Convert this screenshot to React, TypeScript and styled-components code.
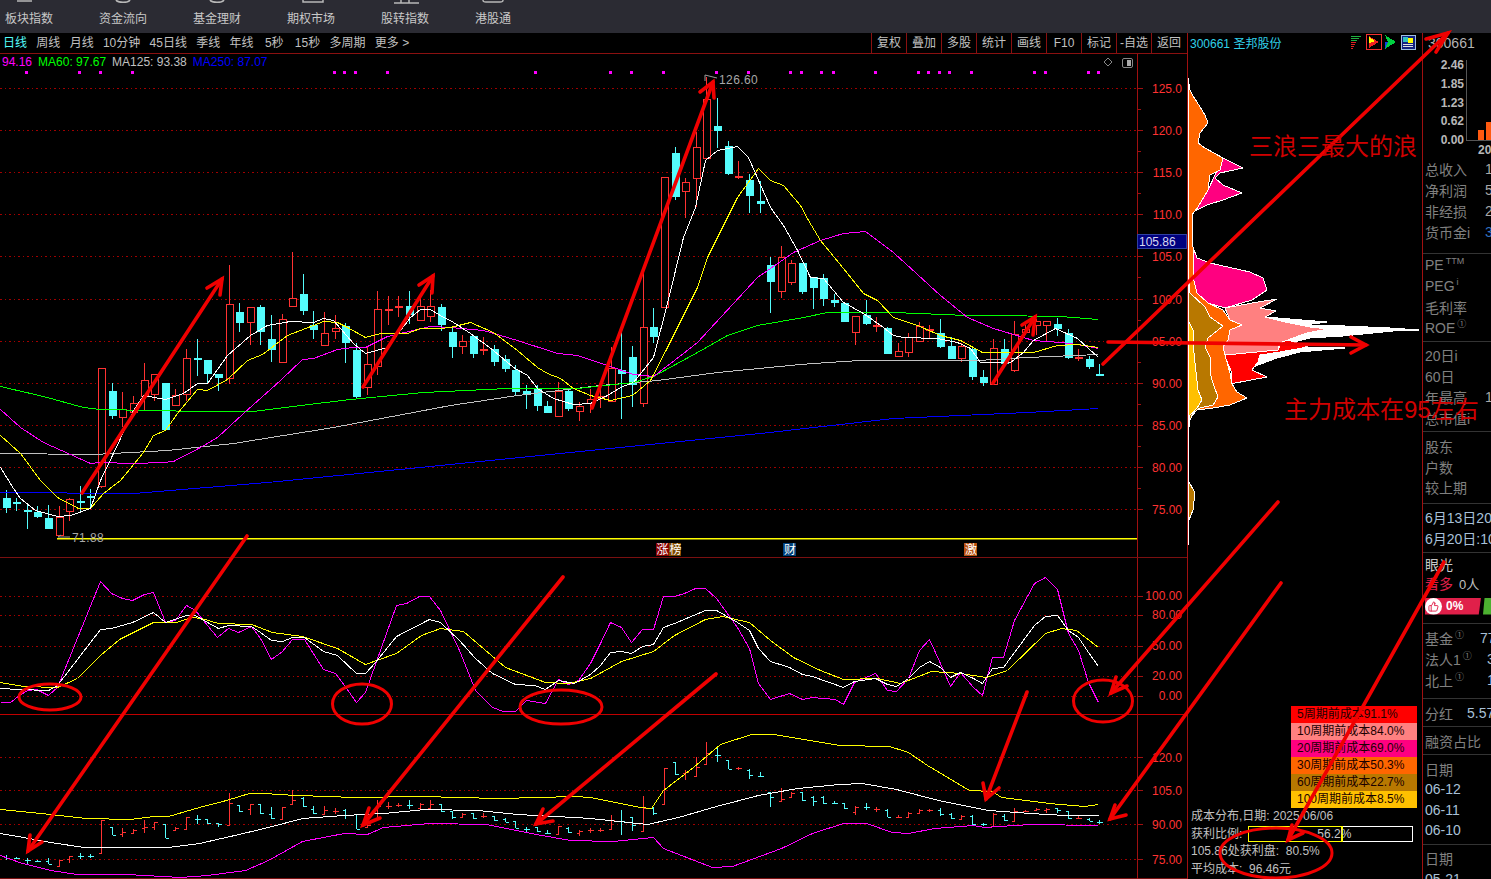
import React from "react";
import styled, { createGlobalStyle } from "styled-components";
import { ThumbsUp } from "lucide-react";

const RED = "#ff3232";
const CYAN = "#54fcfc";
const GRID = "#a00000";
const FONT = '"Liberation Sans", "Noto Sans CJK SC", sans-serif';

// candle: colour, high, body top, body bottom, low (page pixels)
type Candle = ["r" | "c", number, number, number, number];
const candles: Candle[] = [
  ["c", 490, 498, 508, 513], ["c", 498, 502, 503, 511], ["c", 505, 510, 512, 529], ["c", 506, 512, 517, 518],
  ["c", 505, 518, 529, 529], ["r", 506, 517, 536, 536], ["r", 498, 499, 512, 521], ["c", 486, 501, 502, 513],
  ["c", 489, 496, 497, 508], ["r", 368, 368, 487, 488], ["c", 383, 391, 416, 419], ["r", 392, 409, 418, 427],
  ["r", 396, 403, 413, 413], ["r", 363, 380, 397, 410], ["r", 374, 374, 395, 401], ["c", 383, 383, 430, 430],
  ["r", 389, 395, 406, 406], ["r", 349, 358, 395, 401], ["c", 339, 358, 359, 376], ["c", 360, 360, 374, 383],
  ["c", 374, 374, 378, 391], ["r", 265, 304, 379, 384], ["c", 303, 312, 323, 332], ["r", 307, 307, 323, 345],
  ["c", 305, 307, 332, 345], ["c", 315, 339, 350, 362], ["r", 314, 319, 363, 363], ["r", 252, 298, 307, 307],
  ["c", 274, 294, 311, 315], ["c", 311, 325, 330, 339], ["r", 312, 333, 346, 346], ["r", 315, 328, 332, 339],
  ["c", 323, 326, 343, 363], ["c", 343, 350, 397, 399], ["r", 347, 364, 388, 395], ["r", 291, 309, 367, 375],
  ["r", 296, 309, 311, 325], ["r", 296, 306, 307, 317], ["c", 291, 306, 315, 324], ["r", 297, 306, 321, 321],
  ["r", 290, 306, 317, 322], ["c", 304, 307, 325, 331], ["c", 327, 332, 347, 358], ["r", 335, 341, 347, 354],
  ["c", 336, 336, 354, 358], ["r", 337, 349, 350, 355], ["c", 345, 349, 362, 366], ["c", 355, 359, 369, 372],
  ["c", 365, 370, 392, 396], ["c", 385, 391, 395, 409], ["c", 385, 389, 406, 411], ["c", 401, 406, 413, 413],
  ["r", 382, 391, 417, 417], ["c", 389, 391, 409, 411], ["r", 402, 406, 412, 421], ["r", 389, 399, 404, 413],
  ["r", 389, 396, 399, 408], ["r", 347, 368, 402, 402], ["c", 325, 370, 374, 419], ["c", 346, 357, 385, 407],
  ["r", 273, 327, 404, 407], ["c", 308, 327, 337, 343], ["r", 177, 177, 308, 308], ["c", 147, 153, 197, 200],
  ["r", 178, 182, 192, 218], ["r", 132, 147, 179, 207], ["r", 77, 99, 159, 159], ["c", 98, 126, 131, 148],
  ["c", 141, 146, 174, 175], ["r", 161, 176, 177, 179], ["c", 174, 180, 196, 213], ["c", 181, 201, 204, 213],
  ["c", 257, 265, 282, 313], ["r", 246, 257, 292, 298], ["r", 260, 263, 283, 285], ["c", 263, 263, 292, 294],
  ["c", 277, 277, 288, 309], ["c", 274, 278, 299, 306], ["c", 294, 300, 303, 307], ["c", 302, 303, 322, 322],
  ["r", 316, 316, 333, 345], ["c", 300, 315, 324, 325], ["r", 317, 325, 326, 332], ["c", 327, 328, 354, 354],
  ["r", 343, 351, 357, 357], ["r", 333, 337, 353, 357], ["r", 322, 326, 342, 342], ["r", 325, 329, 331, 338],
  ["c", 319, 333, 347, 348], ["c", 337, 346, 359, 359], ["r", 343, 346, 359, 362], ["c", 347, 349, 377, 380],
  ["c", 370, 377, 383, 386], ["r", 339, 348, 385, 385], ["c", 339, 349, 364, 365], ["r", 321, 334, 371, 372],
  ["r", 325, 329, 333, 335], ["r", 319, 321, 326, 335], ["r", 321, 321, 326, 342], ["c", 318, 324, 329, 336],
  ["c", 329, 333, 358, 359], ["r", 349, 357, 359, 361], ["c", 356, 359, 367, 369], ["c", 364, 374, 375, 376],
];

// boll bar: colour, top, bottom, open tick, close tick
type Bar = ["r" | "c", number, number, number, number];
const bars: Bar[] = [
  ["c", 855, 860, 857, 858], ["c", 857, 859, 858, 858], ["c", 858, 864, 860, 860], ["c", 860, 862, 861, 861],
  ["c", 858, 864, 861, 864], ["r", 860, 867, 866, 860], ["r", 856, 863, 859, 856], ["c", 853, 859, 856, 856],
  ["c", 854, 858, 856, 856], ["r", 820, 853, 853, 820], ["c", 827, 835, 827, 835], ["r", 828, 837, 834, 832],
  ["r", 829, 834, 833, 830], ["r", 820, 833, 828, 827], ["r", 822, 830, 827, 822], ["c", 824, 838, 824, 838],
  ["r", 827, 831, 830, 828], ["r", 817, 829, 829, 817], ["c", 815, 824, 819, 819], ["c", 819, 824, 819, 823],
  ["c", 823, 827, 823, 824], ["r", 793, 825, 825, 803], ["c", 805, 812, 805, 811], ["r", 804, 815, 809, 804],
  ["c", 804, 814, 804, 813], ["c", 807, 819, 814, 818], ["r", 807, 820, 819, 807], ["r", 790, 805, 804, 800],
  ["c", 797, 807, 798, 806], ["c", 806, 814, 809, 813], ["r", 806, 815, 814, 810], ["r", 808, 814, 811, 811],
  ["c", 809, 819, 810, 815], ["c", 814, 829, 814, 829], ["r", 824, 828, 827, 825], ["r", 800, 820, 818, 806],
  ["r", 802, 809, 806, 806], ["r", 803, 807, 805, 805], ["c", 800, 809, 805, 805], ["r", 803, 808, 808, 804],
  ["r", 800, 808, 808, 804], ["c", 804, 812, 804, 811], ["c", 811, 819, 811, 817], ["r", 813, 817, 817, 814],
  ["c", 813, 819, 813, 818], ["r", 813, 818, 816, 816], ["c", 816, 821, 816, 820], ["c", 818, 822, 819, 822],
  ["c", 821, 828, 821, 828], ["c", 827, 833, 829, 829], ["c", 827, 832, 827, 831], ["c", 830, 834, 833, 833],
  ["r", 826, 835, 834, 826], ["c", 827, 833, 828, 832], ["r", 830, 836, 833, 831], ["r", 828, 833, 830, 830],
  ["r", 828, 832, 830, 830], ["r", 815, 830, 829, 820], ["c", 810, 835, 821, 821], ["c", 817, 831, 817, 825],
  ["r", 796, 832, 831, 808], ["c", 807, 815, 808, 813], ["r", 768, 805, 804, 768], ["c", 762, 775, 762, 774],
  ["r", 770, 780, 773, 772], ["r", 757, 777, 776, 767], ["r", 742, 765, 764, 753], ["c", 748, 762, 755, 755],
  ["c", 760, 769, 760, 769], ["r", 767, 770, 768, 768], ["c", 769, 779, 770, 775], ["c", 772, 777, 776, 776],
  ["c", 792, 807, 792, 797], ["r", 788, 802, 801, 799], ["r", 792, 798, 797, 793], ["c", 792, 801, 792, 800],
  ["c", 796, 806, 797, 801], ["c", 796, 804, 797, 803], ["c", 801, 804, 803, 803], ["c", 803, 809, 803, 808],
  ["r", 806, 815, 812, 807], ["c", 803, 810, 807, 807], ["r", 807, 812, 809, 809], ["c", 809, 817, 810, 817],
  ["r", 815, 818, 817, 817], ["r", 812, 817, 817, 813], ["r", 809, 814, 813, 810], ["r", 809, 812, 810, 810],
  ["c", 808, 816, 810, 814], ["c", 813, 819, 814, 818], ["r", 815, 819, 819, 816], ["c", 815, 825, 816, 824],
  ["c", 823, 826, 824, 824], ["r", 813, 826, 826, 814], ["c", 814, 821, 816, 820], ["r", 808, 822, 821, 811],
  ["r", 810, 812, 811, 811], ["r", 808, 811, 810, 809], ["r", 808, 813, 810, 809], ["c", 808, 813, 808, 810],
  ["c", 811, 819, 811, 818], ["r", 816, 819, 818, 818], ["c", 818, 821, 819, 821], ["c", 820, 824, 822, 822],
];

const ma = {
  white: "0,467 13,488 20,498 35,510 57,516 70,515 90,508 100,480 113,453 133,410 143,395 165,399 183,393 197,383 207,383 227,355 250,335 267,325 290,321 313,322 323,318 333,320 353,343 365,353 387,347 410,317 420,309 430,309 443,317 450,320 470,333 493,350 513,367 527,375 537,388 553,398 573,404 590,403 607,395 620,387 633,382 653,357 667,303 683,237 695,207 705,160 717,150 737,146 748,157 770,207 783,225 797,250 810,277 823,278 843,302 863,313 883,327 893,335 903,337 937,338 957,342 970,348 980,362 1010,362 1023,352 1033,340 1055,328 1077,338 1098,357",
  yellow: "0,435 20,453 40,480 57,497 78,508 90,508 103,493 120,480 143,452 153,435 165,430 177,413 197,389 207,390 227,379 247,360 262,354 287,335 313,325 323,321 337,322 347,327 365,337 380,333 393,333 407,333 420,328 440,328 450,327 470,322 493,332 517,350 537,367 547,373 560,378 573,388 590,395 610,400 632,395 650,380 667,347 697,287 707,257 737,197 758,168 770,180 783,185 800,205 808,220 820,240 843,268 863,293 877,300 893,317 917,325 940,335 960,340 982,352 1033,352 1057,345 1077,344 1098,347",
  magenta: "0,409 20,427 43,442 70,454 90,463 100,462 133,463 163,462 173,461 200,447 217,437 243,413 280,380 302,359 313,358 337,349 353,347 365,347 387,336 430,326 450,327 483,330 517,340 557,353 577,355 607,365 633,374 653,376 683,353 697,342 757,277 793,252 820,240 843,233 865,231 893,252 940,295 967,317 993,328 1033,340 1060,342 1077,344 1098,348",
  green: "0,386 43,396 83,407 100,409 200,411 253,411 300,405 350,399 423,392 507,388 577,388 633,382 653,376 697,352 727,335 757,325 803,317 827,312 893,312 967,315 993,315 1060,316 1098,319",
  gray: "0,453 93,454 167,450 233,443 333,427 450,405 517,395 600,385 657,380 717,372 800,364 827,362 860,360 977,360 1027,357 1098,354",
  blue: "0,492 133,493 267,482 460,463 760,433 893,418 1027,412 1098,408",
};

const kdj = {
  magenta: "0,702 10,702 19,695 27,690 36,689 48,695 57,687 100,581 111,593 122,598 132,600 144,594 153,592 165,622 175,620 186,605 195,610 207,625 217,637 228,628 238,632 251,626 260,638 271,659 282,651 292,639 304,639 323,669 335,673 344,685 356,702 365,692 396,605 406,603 419,596 429,596 440,610 459,650 475,690 492,707 503,711 515,711 526,700 545,703 558,679 568,684 578,680 590,663 600,643 610,622 621,627 631,642 642,629 653,629 663,596 674,596 684,593 695,588 705,588 716,598 737,627 749,648 758,683 770,699 789,693 802,699 812,697 835,699 843,704 854,682 875,673 887,690 896,691 908,678 919,650 929,639 940,663 950,686 960,672 973,687 982,695 992,657 1003,657 1014,620 1034,583 1045,577 1057,589 1068,633 1078,650 1088,682 1098,702",
  white: "0,688 19,689 48,690 57,685 100,629 111,628 132,622 153,612 165,622 186,615 195,615 207,622 218,628 228,625 251,626 260,632 271,640 282,641 292,637 304,637 323,651 337,655 356,673 365,673 375,662 396,636 429,619 440,622 459,640 475,658 492,673 515,684 534,685 545,689 558,680 574,683 590,674 600,665 610,652 621,651 631,653 642,646 653,644 663,627 674,623 705,610 716,610 737,622 749,630 758,648 770,661 789,667 802,674 812,676 843,687 854,681 875,678 887,684 896,686 908,678 919,667 929,661 940,667 950,677 960,672 973,678 982,683 992,668 1003,667 1014,652 1034,625 1045,616 1057,615 1068,630 1078,637 1088,652 1098,666",
  yellow: "0,682 23,686 57,687 77,678 100,655 119,639 153,622 176,622 191,617 201,618 218,623 251,624 272,632 302,636 337,648 365,664 396,653 421,635 440,628 463,631 505,667 545,682 568,683 590,678 601,672 621,661 653,651 674,635 705,619 722,616 749,622 770,640 793,657 820,670 843,679 877,678 900,683 931,671 946,672 960,673 986,677 1007,670 1045,633 1061,628 1076,630 1098,647",
};

const boll = {
  yellow: "0,809 11,810 50,814 86,818 130,819 153,816 168,816 199,807 226,800 249,793 264,793 295,795 329,796 352,797 425,796 455,797 501,798 574,796 590,797 640,807 651,808 663,790 693,767 720,744 751,734 774,734 839,745 889,746 908,752 927,765 969,790 992,791 1001,797 1049,803 1084,806 1098,804",
  white: "0,833 23,837 50,842 84,847 168,847 199,843 230,836 268,827 302,818 344,815 383,813 425,809 478,810 517,814 574,817 590,818 647,824 678,817 716,806 758,795 797,788 839,784 862,783 896,789 938,800 988,810 1030,813 1065,815 1098,815",
  magenta: "0,855 19,862 50,870 77,874 126,874 180,877 207,875 245,870 268,860 302,841 344,833 367,834 383,827 429,823 486,824 536,834 570,840 613,841 653,837 663,848 712,867 732,866 781,848 812,833 843,823 866,823 892,832 908,833 934,828 973,825 984,827 1030,824 1098,825",
};

const profile = [
  // total, spikes past the 10 period layer
  { fill: "#ffffff", pts: "1265,317 1327,322 1305,325 1345,326 1390,328 1419,330 1393,331 1343,336 1310,338 1290,343 1285,347 1345,348 1300,352 1277,358 1253,367 1240,360 1260,352" },
  // 5 period
  { fill: "#ff0000", pts: "1225,355 1278,350 1283,338 1308,347 1280,352 1260,355 1258,362 1252,370 1267,377 1230,384 1232,373 1225,357" },
  // 10 period
  { fill: "#ff8080", pts: "1225,308 1258,302 1277,299 1260,308 1276,311 1265,317 1285,322 1310,327 1328,329 1307,333 1293,338 1280,343 1278,350 1225,355 1223,347 1228,340 1230,330 1242,325 1230,320" },
  // 20 period
  { fill: "#ff0080", pts: "1223,158 1243,168 1220,173 1215,178 1223,185 1242,193 1223,200 1207,205 1197,210 1198,207 1208,190" },
  { fill: "#ff0080", pts: "1193,247 1197,258 1210,263 1250,272 1263,278 1267,290 1252,300 1225,308 1208,303 1197,293 1193,277" },
  // 30 period
  { fill: "#ff6600", pts: "1188,78 1190,90 1193,96 1197,102 1205,115 1208,123 1200,133 1198,143 1205,148 1223,158 1220,170 1210,175 1208,190 1198,207 1192,215 1192,230 1193,247 1193,277 1197,293 1208,303 1223,310 1230,320 1242,325 1230,330 1228,340 1223,347 1225,355 1230,373 1232,384 1237,392 1247,398 1230,405 1213,408 1197,410 1190,418 1189,427 1188,427" },
  // 60 period
  { fill: "#b87800", pts: "1188,273 1190,293 1205,307 1210,317 1223,326 1208,338 1205,347 1210,357 1210,373 1213,383 1218,397 1213,405 1200,408 1193,413 1190,420 1188,424" },
  { fill: "#b87800", pts: "1188,480 1195,493 1193,510 1189,520 1188,520" },
  // 100 period
  { fill: "#ffc000", pts: "1188,320 1193,330 1193,343 1195,363 1198,390 1202,400 1197,408 1190,415 1188,427" },
];

// shaft x1 y1 x2 y2, then the two ends of the head
const arrows: number[][] = [
  [82, 493, 222, 279, 207, 288, 220, 295],
  [363, 387, 433, 276, 419, 285, 432, 293],
  [592, 408, 713, 82, 700, 92, 714, 98],
  [993, 383, 1035, 317, 1022, 325, 1033, 335],
  [1103, 364, 1448, 33, 1426, 39, 1436, 52],
  [1108, 342, 1366, 345, 1351, 337, 1351, 353],
  [247, 536, 28, 851, 30, 835, 42, 842],
  [563, 577, 363, 825, 369, 808, 380, 818],
  [716, 674, 536, 824, 543, 809, 553, 821],
  [1278, 502, 1111, 693, 1116, 677, 1127, 686],
  [1281, 583, 1110, 819, 1115, 805, 1126, 815],
  [1027, 692, 986, 799, 983, 783, 999, 788],
  [1444, 562, 1288, 840, 1292, 825, 1303, 833],
];

const rings = [
  [50, 697, 31, 13],
  [362, 704, 29.5, 20],
  [561, 707, 41, 17],
  [1103, 701, 29.5, 21],
  [1276, 853, 56, 25],
];

const navItems = [
  { label: "板块指数", icon: "M12 1h15" },
  { label: "资金流向", icon: "M17 0c2 3 12 3 14 0" },
  { label: "基金理财", icon: "M17 0c2 3 12 3 14 0" },
  { label: "期权市场", icon: "M16 0v2h20V0" },
  { label: "股转指数", icon: "M13 3h25M20 0v3M28 0v3" },
  { label: "港股通", icon: "M8 0c0 2 1 2 3 2h14c2 0 3 0 3-2" },
];

const periods = ["周线", "月线", "10分钟", "45日线", "季线", "年线"];
const tools = ["复权", "叠加", "多股", "统计", "画线", "F10", "标记", "-自选", "返回"];
const costRows = [
  { bg: "#ff0000", text: "5周期前成本91.1%" },
  { bg: "#ff8080", text: "10周期前成本84.0%" },
  { bg: "#ff0080", text: "20周期前成本69.0%" },
  { bg: "#ff6600", text: "30周期前成本50.3%" },
  { bg: "#b87800", text: "60周期前成本22.7%" },
  { bg: "#ffc000", text: "100周期前成本8.5%" },
];
const priceAxis = ["125.0", "120.0", "115.0", "110.0", "105.0", "100.0", "95.00", "90.00", "85.00", "80.00", "75.00"];
const kdjAxis: [string, number][] = [["100.00", 596], ["80.00", 615], ["50.00", 646], ["20.00", 676], ["0.00", 696]];
const bollAxis: [string, number][] = [["120.0", 757], ["105.0", 790], ["90.00", 824], ["75.00", 859]];
const pinkDots = [25, 78, 99, 131, 333, 343, 354, 386, 534, 609, 630, 662, 715, 747, 789, 800, 820, 832, 874, 917, 927, 938, 948, 970, 1033, 1044, 1087, 1097];

const barX = (i: number) => Math.round(5.5 + 10.62 * i) + 0.5;

function Candles() {
  return (
    <g shapeRendering="crispEdges">
      {candles.map(([tone, high, top, bottom, low], i) => {
        const x = barX(i);
        const c = tone === "r" ? RED : CYAN;
        const solid = tone === "c";
        return (
          <g key={i}>
            <line x1={x} x2={x} y1={high} y2={low} stroke={c} />
            {bottom - top < 3 ? (
              <rect x={x - 4} y={top} width={8} height={Math.max(bottom - top, 1.5)} fill={c} />
            ) : solid ? (
              <rect x={x - 4} y={top} width={8} height={bottom - top} fill={c} />
            ) : (
              <rect x={x - 3.5} y={top + 0.5} width={7} height={bottom - top - 1} fill="#000" stroke={c} />
            )}
          </g>
        );
      })}
    </g>
  );
}

function OhlcBars() {
  return (
    <g shapeRendering="crispEdges">
      {bars.map(([tone, top, bottom, open, close], i) => {
        const x = barX(i);
        const c = tone === "r" ? RED : CYAN;
        return (
          <g key={i} stroke={c}>
            <line x1={x} x2={x} y1={top} y2={bottom} />
            <line x1={x - 3} x2={x} y1={open + 0.5} y2={open + 0.5} />
            <line x1={x} x2={x + 3} y1={close + 0.5} y2={close + 0.5} />
          </g>
        );
      })}
    </g>
  );
}

function Trace({ pts, color }: { pts: string; color: string }) {
  return (
    <polyline
      points={pts}
      transform="translate(0.5 0.5)"
      fill="none"
      stroke={color}
      strokeWidth={1}
      shapeRendering="crispEdges"
    />
  );
}

function Grid({ ys }: { ys: number[] }) {
  return (
    <g shapeRendering="crispEdges">
      {ys.map((y) => (
        <line key={y} x1={0} x2={1137} y1={y + 0.5} y2={y + 0.5} stroke={GRID} strokeDasharray="1.5 3" />
      ))}
    </g>
  );
}

function Axis({ ticks, top, bottom, dy = 5 }: { ticks: [string, number][]; top: number; bottom: number; dy?: number }) {
  return (
    <g>
      <line x1={1137.5} x2={1137.5} y1={top} y2={bottom} stroke="#a01010" shapeRendering="crispEdges" />
      {ticks.map(([label, y]) => (
        <g key={label}>
          <line x1={1137} x2={1143} y1={y + 0.5} y2={y + 0.5} stroke="#a01010" shapeRendering="crispEdges" />
          <AxisText x={1182} y={y + dy} textAnchor="end">
            {label}
          </AxisText>
        </g>
      ))}
    </g>
  );
}

function PricePane() {
  const gridYs = priceAxis.map((_, i) => Math.round(88 + i * 42.1));
  return (
    <Pane $h={504}>
      <ChartSvg width={1187} height={503} viewBox="0 54 1187 503">
        <Grid ys={gridYs} />
        {pinkDots.map((x) => (
          <rect key={x} x={x} y={71} width={3} height={3} fill="#ff00ff" />
        ))}
        <Candles />
        <Trace pts={ma.gray} color="#c0c0c0" />
        <Trace pts={ma.blue} color="#0000ff" />
        <Trace pts={ma.green} color="#00ff00" />
        <Trace pts={ma.magenta} color="#ff00ff" />
        <Trace pts={ma.yellow} color="#ffff00" />
        <Trace pts={ma.white} color="#ffffff" />
        <rect x={57} y={538} width={1080} height={1.5} fill="#ffff00" />
        <polyline points="717,78 705,75 705,81" fill="none" stroke="#999" />
        <PriceNote x={719} y={84}>126.60</PriceNote>
        <polyline points="70,537 58,537 61,535" fill="none" stroke="#999" />
        <PriceNote x={72} y={542}>71.88</PriceNote>
        <Axis top={54} bottom={557} ticks={priceAxis.map((l, i): [string, number] => [l, gridYs[i]])} />
        {gridYs.slice(0, -1).map((y) => (
          <line key={y} x1={1137} x2={1141} y1={y + 21.5} y2={y + 21.5} stroke="#a01010" shapeRendering="crispEdges" />
        ))}
        <rect x={1137.5} y={234.5} width={49} height={14} fill="#00007f" stroke="#3040a0" />
        <PriceTag x={1139} y={246}>105.86</PriceTag>
        <path d="M1108 58l4 4-4 4-4-4z" fill="none" stroke="#888" />
        <rect x={1122.5} y={58.5} width={10} height={9} rx={1.5} fill="none" stroke="#888" />
        <rect x={1127} y={60} width={4} height={6} fill="#aaa" />
        <g>
          <rect x={656} y={543} width={13} height={13} fill="#8a0000" />
          <rect x={669} y={543} width={12} height={13} fill="#7d4a00" />
          <rect x={783} y={543} width={13} height={13} fill="#003f7a" />
          <rect x={964} y={543} width={13} height={13} fill="#b85010" />
          <TagText x={656.5} y={554}>涨</TagText>
          <TagText x={669.5} y={554}>榜</TagText>
          <TagText x={784} y={554}>财</TagText>
          <TagText x={965} y={554}>激</TagText>
        </g>
      </ChartSvg>
      <MaLegend>
        <MaValue $color="#ff00ff">94.16</MaValue>
        <MaValue $color="#00ff00">MA60: 97.67</MaValue>
        <MaValue $color="#c0c0c0">MA125: 93.38</MaValue>
        <MaValue $color="#0000ff">MA250: 87.07</MaValue>
      </MaLegend>
    </Pane>
  );
}

function KdjPane() {
  return (
    <Pane $h={157} $bright>
      <ChartSvg width={1187} height={156} viewBox="0 558 1187 156">
        <Grid ys={kdjAxis.map(([, y]) => y)} />
        <Trace pts={kdj.magenta} color="#ff00ff" />
        <Trace pts={kdj.yellow} color="#ffff00" />
        <Trace pts={kdj.white} color="#ffffff" />
        <Axis top={558} bottom={714} ticks={kdjAxis} dy={4} />
      </ChartSvg>
    </Pane>
  );
}

function BollPane() {
  return (
    <Pane $h={164}>
      <ChartSvg width={1187} height={164} viewBox="0 715 1187 164">
        <Grid ys={bollAxis.map(([, y]) => y)} />
        <OhlcBars />
        <Trace pts={boll.yellow} color="#ffff00" />
        <Trace pts={boll.white} color="#ffffff" />
        <Trace pts={boll.magenta} color="#ff00ff" />
        <Axis top={715} bottom={879} ticks={bollAxis} />
      </ChartSvg>
    </Pane>
  );
}

function Annotations() {
  return (
    <Overlay width={1491} height={879} viewBox="0 0 1491 879">
      {arrows.map(([x1, y1, x2, y2, ax, ay, bx, by], i) => (
        <g key={i} fill="none" stroke="#f00000" strokeWidth={3.6} strokeLinecap="round">
          <line x1={x1} y1={y1} x2={x2} y2={y2} />
          <polyline points={`${ax},${ay} ${x2},${y2} ${bx},${by}`} />
        </g>
      ))}
      {rings.map(([cx, cy, rx, ry]) => (
        <ellipse key={cx} cx={cx} cy={cy} rx={rx} ry={ry} fill="none" stroke="#f00000" strokeWidth={3} />
      ))}
      <Remark x={1249} y={155}>三浪三最大的浪</Remark>
      <Remark x={1284} y={418}>主力成本在95左右</Remark>
    </Overlay>
  );
}

function MiniChart() {
  const rows: [string, number][] = [["2.46", 69], ["1.85", 88], ["1.23", 107], ["0.62", 125], ["0.00", 144]];
  return (
    <MiniSvg width={68} height={104} viewBox="1423 53 68 104">
      {rows.map(([t, y]) => (
        <MiniText key={t} x={1464} y={y} textAnchor="end">
          {t}
        </MiniText>
      ))}
      <polyline points="1466.5,60 1466.5,140.5 1491,140.5" fill="none" stroke="#555" shapeRendering="crispEdges" />
      <rect x={1478} y={130} width={6} height={10} fill="#ff5a10" />
      <rect x={1486} y={122} width={6} height={18} fill="#ff5a10" />
      <MiniText x={1478} y={154}>20</MiniText>
    </MiniSvg>
  );
}

function SideBar() {
  return (
    <Side>
      <SideCode>300661</SideCode>
      <MiniChart />
      <Section $pt={1} $pb={11}>
        <Row><Label>总收入</Label><Value $tone="#a8a8a8">1</Value></Row>
        <Row><Label>净利润</Label><Value $tone="#a8a8a8">5</Value></Row>
        <Row><Label>非经损</Label><Value $tone="#a8a8a8">2</Value></Row>
        <Row><Label>货币金i</Label><Value $tone="#3070c0">3</Value></Row>
      </Section>
      <Section $pt={0} $pb={3}>
        <Row><Label>PE<Sup>TTM</Sup></Label></Row>
        <Row><Label>PEG<Sup>i</Sup></Label></Row>
        <Row><Label>毛利率</Label></Row>
        <Row><Label>ROE<Sup>①</Sup></Label></Row>
      </Section>
      <Section $pt={2} $pb={3}>
        <Row><Label>20日i</Label></Row>
        <Row><Label>60日</Label></Row>
        <Row><Label>年最高</Label><Value $tone="#a8a8a8">1</Value></Row>
        <Row><Label>总市值i</Label></Row>
      </Section>
      <Section $pt={4} $pb={5} $rh={20.5}>
        <Row><Label>股东</Label></Row>
        <Row><Label>户数</Label></Row>
        <Row><Label>较上期</Label></Row>
      </Section>
      <Section $pt={3} $pb={3}>
        <Row><DateText>6月13日20.5</DateText></Row>
        <Row><DateText>6月20日:10</DateText></Row>
      </Section>
      <Section $pt={1} $pb={8}>
        <Row $h={20}><Eye>眼光</Eye></Row>
        <Row $h={19}><Bullish>看多</Bullish><BullCount>0人</BullCount></Row>
        <Vote>
          <VoteRed>
            <ThumbBadge><ThumbsUp size={11} color="#e0204a" strokeWidth={2} /></ThumbBadge>
            <VotePct>0%</VotePct>
          </VoteRed>
          <VoteGreen />
        </Vote>
      </Section>
      <Section $pt={4} $pb={7}>
        <Row><Label $w={55}>基金<Sup>①</Sup></Label><Value>77</Value></Row>
        <Row><Label $w={62}>法人1<Sup>①</Sup></Label><Value>3</Value></Row>
        <Row><Label $w={62}>北上<Sup>①</Sup></Label><Value>1</Value></Row>
      </Section>
      <Section $pt={4} $pb={2}>
        <Row><Label $w={42}>分红</Label><Value>5.57</Value></Row>
      </Section>
      <Section $pt={4} $pb={2}>
        <Row><Label>融资占比</Label></Row>
      </Section>
      <Section $pt={4} $pb={3} $rh={20.5}>
        <Row><Label>日期</Label></Row>
        <Row><DateText>06-12</DateText></Row>
        <Row><DateText>06-11</DateText></Row>
        <Row><DateText>06-10</DateText></Row>
      </Section>
      <Section $pt={3} $pb={0} $plain>
        <Row><Label>日期</Label></Row>
        <Row><DateText>05-21</DateText></Row>
      </Section>
    </Side>
  );
}

export default function App() {
  return (
    <Page>
      <GlobalStyle />
      <TopNav>
        {navItems.map((item) => (
          <NavItem key={item.label}>
            <NavIcon width={48} height={4} viewBox="0 0 48 4">
              <path d={item.icon} fill="none" stroke="#b8b8b8" strokeWidth={1.5} />
            </NavIcon>
            <span>{item.label}</span>
          </NavItem>
        ))}
      </TopNav>
      <Workspace>
        <ChartColumn>
          <Toolbar>
            <Periods>
              <Period $active>日线</Period>
              {periods.map((p) => (
                <Period key={p}>{p}</Period>
              ))}
              <Period $wide>5秒</Period>
              <Period>15秒</Period>
              <Period>多周期</Period>
              <Period>更多 &gt;</Period>
            </Periods>
            <Tools>
              {tools.map((t) => (
                <ToolButton key={t}>{t}</ToolButton>
              ))}
            </Tools>
          </Toolbar>
          <PricePane />
          <KdjPane />
          <BollPane />
        </ChartColumn>
        <CostPanel>
          <CostHeader>
            <StockName>300661 圣邦股份</StockName>
            <svg width={66} height={16} viewBox="0 0 66 16" shapeRendering="crispEdges">
              <path d="M1 2.5h10M1 4.5h8M1 6.5h6" stroke="#20b040" />
              <path d="M1 8.5h5M1 10.5h4M1 12.5h3M1 14.5h2" stroke="#e02020" />
              <rect x={16.5} y={0.5} width={15} height={15} fill="none" stroke="#f03030" />
              <path d="M19 2l10 6-10 6z" fill="#f02020" />
              <path d="M19 3l6 4-6 2z" fill="#ffff00" />
              <path d="M35 1l11 7-11 7 3-7z" fill="#00d040" />
              <path d="M35 8h3l-3 7z" fill="#1040e0" />
              <rect x={51} y={1} width={14} height={14} fill="#102080" stroke="#a0c0e0" />
              <rect x={53} y={3} width={5} height={5} fill="#30c0c0" />
              <rect x={58} y={4} width={5} height={5} fill="#ffff00" />
              <path d="M53 10.5h10M53 12.5h10" stroke="#e0e0e0" />
            </svg>
          </CostHeader>
          <ProfileSvg width={234} height={653} viewBox="1188 53 234 653">
            <line x1={1188.5} x2={1188.5} y1={78} y2={545} stroke="#fff" />
            {profile.map((layer, i) => (
              <polygon key={i} points={layer.pts} fill={layer.fill} stroke="#fff" strokeWidth={1} shapeRendering="crispEdges" />
            ))}
          </ProfileSvg>
          <CostLegend>
            {costRows.map((row) => (
              <CostRow key={row.text} $bg={row.bg}>
                {row.text}
              </CostRow>
            ))}
          </CostLegend>
          <CostInfo>
            <InfoLine>成本分布,日期: 2025/06/06</InfoLine>
            <InfoLine>
              获利比例:
              <ProfitBar>
                <ProfitFill style={{ width: "56.2%" }} />
                <ProfitText>56.2%</ProfitText>
              </ProfitBar>
            </InfoLine>
            <InfoLine>105.86处获利盘:&nbsp; 80.5%</InfoLine>
            <InfoLine>平均成本:&nbsp; 96.46元</InfoLine>
          </CostInfo>
        </CostPanel>
        <SideBar />
      </Workspace>
      <Annotations />
    </Page>
  );
}

const GlobalStyle = createGlobalStyle`
  html, body {
    margin: 0;
    padding: 0;
    background: #000;
    overflow: hidden;
  }
`;

const Page = styled.div`
  position: relative;
  width: 1491px;
  height: 879px;
  overflow: hidden;
  background: #000;
  font-family: ${FONT};
  font-size: 12px;
`;

const TopNav = styled.nav`
  display: flex;
  gap: 46px;
  height: 33px;
  padding-left: 5px;
  background: #2b2b33;
  color: #c8c8c8;
  box-sizing: border-box;
`;

const NavItem = styled.div`
  display: flex;
  flex-direction: column;
  align-items: center;
  width: 48px;
  white-space: nowrap;
  line-height: 20px;
  font-size: 12px;

  span {
    margin-top: 5px;
    align-self: flex-start;
  }
`;

const NavIcon = styled.svg`
  display: block;
`;

const Workspace = styled.div`
  display: flex;
  height: 846px;
`;

const ChartColumn = styled.section`
  width: 1187px;
  flex: none;
  border-right: 1px solid #a01010;
`;

const Toolbar = styled.div`
  display: flex;
  justify-content: space-between;
  height: 20px;
  border-bottom: 1px solid #8a1010;
  color: #c0c0c0;
  line-height: 20px;
`;

const Periods = styled.div`
  display: flex;
  gap: 9.3px;
  padding-left: 3px;
`;

const Period = styled.span<{ $active?: boolean; $wide?: boolean }>`
  color: ${(p) => (p.$active ? CYAN : "inherit")};
  margin: 0 ${(p) => (p.$wide ? 2 : 0)}px;
`;

const Tools = styled.div`
  display: flex;
  padding-right: 1px;
`;

const ToolButton = styled.span`
  width: 35px;
  box-sizing: border-box;
  border-left: 1px solid #8a1010;
  text-align: center;
`;

const Pane = styled.div<{ $h: number; $bright?: boolean }>`
  position: relative;
  height: ${(p) => p.$h}px;
  box-sizing: border-box;
  border-bottom: 1px solid ${(p) => (p.$bright ? "#c00000" : "#7a1010")};
`;

const ChartSvg = styled.svg`
  display: block;
`;

const AxisText = styled.text`
  fill: ${RED};
  font-size: 12px;
  font-family: ${FONT};
`;

const PriceNote = styled.text`
  fill: #a8a8a8;
  font-size: 12px;
  font-family: ${FONT};
  letter-spacing: 0.4px;
`;

const PriceTag = styled.text`
  fill: #d8d8f0;
  font-size: 12px;
  font-family: ${FONT};
`;

const TagText = styled.text`
  fill: #fff;
  font-size: 12px;
  font-family: ${FONT};
`;

const MaLegend = styled.div`
  position: absolute;
  top: 1px;
  left: 2px;
  display: flex;
  gap: 6px;
  line-height: 14px;
  white-space: nowrap;
`;

const MaValue = styled.span<{ $color: string }>`
  color: ${(p) => p.$color};
`;

const CostPanel = styled.section`
  display: flex;
  flex-direction: column;
  width: 234px;
  flex: none;
  overflow: hidden;
`;

const CostHeader = styled.header`
  display: flex;
  align-items: center;
  justify-content: space-between;
  height: 20px;
  padding: 0 6px 2px 2px;
  box-sizing: border-box;
`;

const StockName = styled.span`
  color: #30d0e8;
`;

const ProfileSvg = styled.svg`
  display: block;
  flex: none;
`;

const CostLegend = styled.div`
  flex: none;
  width: 126px;
  margin-left: 103px;
`;

const CostRow = styled.div<{ $bg: string }>`
  height: 17px;
  padding-left: 6px;
  background: ${(p) => p.$bg};
  color: #1a0000;
  line-height: 17px;
  font-size: 12px;
  white-space: nowrap;
  overflow: hidden;
`;

const CostInfo = styled.div`
  padding: 0 0 0 3px;
  color: #c0c0c0;
  line-height: 17.5px;
`;

const InfoLine = styled.div`
  display: flex;
  align-items: center;
  height: 17.5px;
  white-space: nowrap;
`;

const ProfitBar = styled.div`
  position: relative;
  width: 165px;
  height: 16px;
  margin-left: 6px;
  box-sizing: border-box;
  border: 1px solid #fff;
`;

const ProfitFill = styled.div`
  height: 100%;
  box-sizing: content-box;
  border-right: 1px solid #ffff00;
  box-shadow: 0 0 0 1px #ffff00;
`;

const ProfitText = styled.span`
  position: absolute;
  top: -1px;
  left: 68px;
  line-height: 16px;
  color: #c8c8c8;
`;

const Side = styled.aside`
  width: 68px;
  flex: none;
  border-left: 1px solid #a01010;
  overflow: hidden;
  color: #808080;
  font-size: 14px;
`;

const SideCode = styled.div`
  height: 20px;
  padding-left: 5px;
  line-height: 20px;
  color: #b4b4b4;
`;

const MiniSvg = styled.svg`
  display: block;
`;

const MiniText = styled.text`
  fill: #b8b8b8;
  font-size: 12px;
  font-weight: bold;
  font-family: ${FONT};
`;

const Row = styled.div<{ $h?: number }>`
  display: flex;
  align-items: center;
  padding-left: 2px;
  height: ${(p) => (p.$h ? `${p.$h}px` : "var(--row, 21px)")};
  white-space: nowrap;
`;

const Section = styled.div<{ $pt: number; $pb: number; $rh?: number; $plain?: boolean }>`
  --row: ${(p) => p.$rh ?? 21}px;
  padding: ${(p) => p.$pt}px 0 ${(p) => p.$pb}px;
  border-bottom: ${(p) => (p.$plain ? "none" : "1px solid #333")};
`;

const Label = styled.span<{ $w?: number }>`
  flex: none;
  width: ${(p) => p.$w ?? 60}px;
  color: #808080;
`;

const Value = styled.span<{ $tone?: string }>`
  flex: none;
  color: ${(p) => p.$tone ?? "#a8c0d8"};
`;

const Sup = styled.sup`
  margin-left: 2px;
  font-size: 9px;
  line-height: 0;
  color: #808080;
`;

const DateText = styled.span`
  color: #a8c0d8;
`;

const Eye = styled.span`
  color: #c8c8c8;
`;

const Bullish = styled.span`
  color: #e0204a;
`;

const BullCount = styled.span`
  margin-left: 6px;
  color: #c0c0c0;
  font-size: 13px;
`;

const Vote = styled.div`
  display: flex;
  gap: 2px;
  margin: 5px 0 0 2px;
  height: 17px;
`;

const VoteRed = styled.div`
  display: flex;
  align-items: center;
  width: 56px;
  flex: none;
  background: #e0204a;
  clip-path: polygon(0 0, 100% 0, 96% 100%, 0 100%);
`;

const VoteGreen = styled.div`
  width: 20px;
  flex: none;
  background: #4cb030;
  clip-path: polygon(8% 0, 100% 0, 100% 100%, 0 100%);
`;

const ThumbBadge = styled.span`
  display: flex;
  align-items: center;
  justify-content: center;
  width: 17px;
  height: 17px;
  border-radius: 50%;
  background: #fff;
`;

const VotePct = styled.span`
  margin-left: 4px;
  color: #fff;
  font-size: 12px;
  font-weight: bold;
`;

const Overlay = styled.svg`
  position: absolute;
  top: 0;
  left: 0;
  pointer-events: none;
`;

const Remark = styled.text`
  fill: #d00000;
  font-size: 24px;
  font-family: ${FONT};
`;
